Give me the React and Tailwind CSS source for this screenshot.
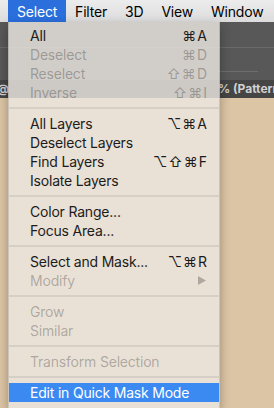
import React from 'react';

const font = { fontFamily: 'Inter, "DejaVu Sans", sans-serif' };

const menuBar = ['Select', 'Filter', '3D', 'View', 'Window'];

// null = separator
const items = [
    { label: 'All', keys: '⌘A' },
    { label: 'Deselect', keys: '⌘D', off: true },
    { label: 'Reselect', keys: '⇧⌘D', off: true },
    { label: 'Inverse', keys: '⇧⌘I', off: true },
    null,
    { label: 'All Layers', keys: '⌥⌘A' },
    { label: 'Deselect Layers' },
    { label: 'Find Layers', keys: '⌥⇧⌘F' },
    { label: 'Isolate Layers' },
    null,
    { label: 'Color Range...' },
    { label: 'Focus Area...' },
    null,
    { label: 'Select and Mask...', keys: '⌥⌘R' },
    { label: 'Modify', off: true, sub: true },
    null,
    { label: 'Grow', off: true },
    { label: 'Similar', off: true },
    null,
    { label: 'Transform Selection', off: true },
    null,
    { label: 'Edit in Quick Mask Mode', active: true },
];

const MenuRow = ({ item }) => {
    if (!item) {
        return (
            <div className="h-[12px] flex items-center">
                <div className="h-[2px] w-full bg-[rgba(0,0,0,0.08)]"></div>
            </div>
        );
    }
    const color = item.active
        ? 'bg-[#3a8af2] text-white'
        : item.off
            ? 'text-[rgba(0,0,0,0.27)]'
            : 'text-[#1c1c1c]';
    return (
        <div className={`h-[19px] flex items-center justify-between pl-[21px] pr-[11px] text-[14px] leading-none ${color}`}>
            <span className="tracking-[-0.2px]">{item.label}</span>
            {item.keys && <span className="tracking-[1px]">{item.keys}</span>}
            {item.sub && (
                <svg width="8" height="9" viewBox="0 0 8 9" className="mr-[2px]">
                    <path d="M0 0 L8 4.5 L0 9 Z" fill="rgba(0,0,0,0.25)" />
                </svg>
            )}
        </div>
    );
};

const App = () => {
    return (
        <div className="w-[274px] h-[408px] relative overflow-hidden flex flex-col bg-[#dcc5a5]" style={font}>
            {/* mac menu bar */}
            <div className="h-[22px] shrink-0 flex items-center pl-[8px] bg-gradient-to-b from-[#ececec] to-[#dcdcdc] text-[14px] text-black tracking-[-0.2px]">
                {menuBar.map((m, i) => (
                    <div key={m} className={`h-[22px] flex items-center px-[9px] ${i === 0 ? 'bg-[#2a6fdc] text-white' : ''}`}>
                        {m}
                    </div>
                ))}
            </div>

            {/* photoshop option bar */}
            <div className="h-[58px] shrink-0 bg-[#585858] flex flex-col">
                <div className="h-[26px] border-b border-[#6a6a6a]"></div>
                <div className="h-[24px] flex items-end justify-end pr-[16px]">
                    <div className="w-[40px] h-[1px] bg-[#6e6e6e]"></div>
                </div>
            </div>

            {/* document tab */}
            <div className="h-[18px] shrink-0 bg-[#454545] flex items-center justify-between text-[12px] font-bold text-[#d2d2d2] overflow-hidden">
                <span className="-ml-[3px]">@</span>
                <span className="-mr-[6px] whitespace-nowrap">% (Pattern</span>
            </div>

            <div className="flex-1"></div>

            {/* dropdown */}
            <div className="absolute left-[8px] top-[22px] bottom-0 w-[212px] pt-[4px] bg-[rgba(236,231,225,0.82)] shadow-[0_4px_10px_rgba(0,0,0,0.3)] border-x border-[rgba(0,0,0,0.12)]">
                {items.map((item, i) => (
                    <MenuRow key={i} item={item} />
                ))}
            </div>
        </div>
    );
};

export default App;
